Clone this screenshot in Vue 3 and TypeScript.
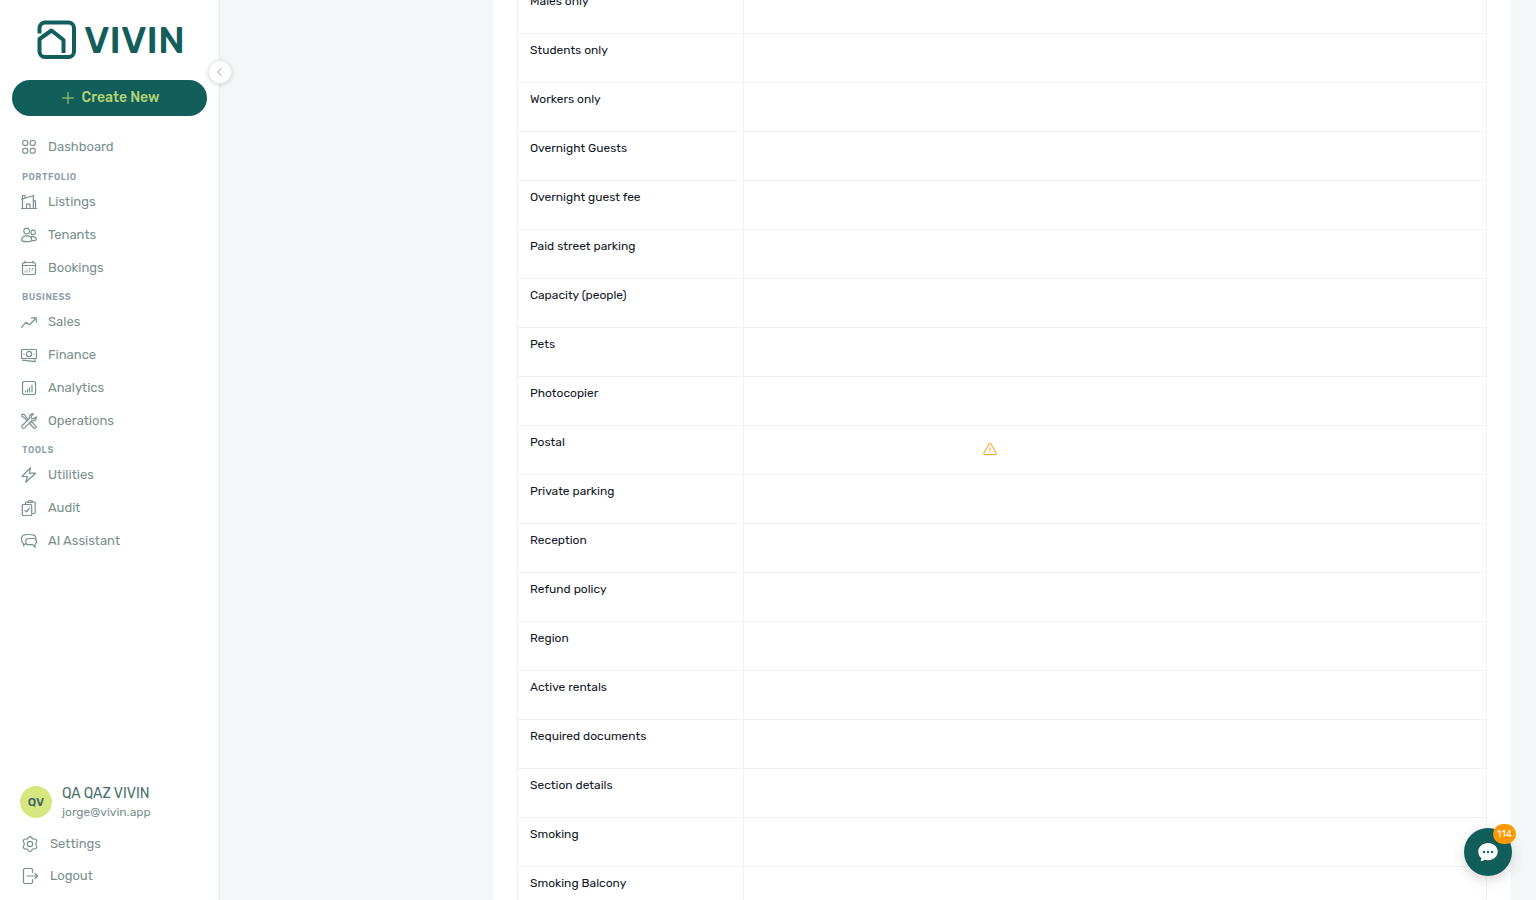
<script setup lang="ts">
interface NavItem {
  label: string
  icon: string
}
interface NavGroup {
  title: string
  items: NavItem[]
}

const icons: Record<string, string> = {
  dashboard:
    'M3.500 1.500h1.500a1.700 1.700 0 0 1 1.700 1.700v1.500a1.700 1.700 0 0 1-1.700 1.700H3.500a1.700 1.700 0 0 1-1.700-1.700V3.200a1.700 1.700 0 0 1 1.700-1.700zM11 1.500h1.500a1.700 1.700 0 0 1 1.700 1.700v1.500a1.700 1.700 0 0 1-1.700 1.700H11a1.700 1.700 0 0 1-1.700-1.700V3.200A1.700 1.700 0 0 1 11 1.500zM3.500 9.300h1.500A1.700 1.700 0 0 1 6.700 11v1.500a1.700 1.700 0 0 1-1.700 1.700H3.500a1.700 1.700 0 0 1-1.700-1.700V11a1.700 1.700 0 0 1 1.700-1.700zM11 9.300h1.500a1.700 1.700 0 0 1 1.700 1.700v1.500a1.700 1.700 0 0 1-1.700 1.700H11a1.700 1.700 0 0 1-1.700-1.700V11A1.700 1.700 0 0 1 11 9.300z',
  listings:
    'M.5 14.500h15M1.500 14.500V5M.7 5.200 13 1.500M12.300 1.800v12.700M1.500 4.500v-3h2.500v2.300M12.300 6.800h2.200v7.700M5.500 14.500v-4.300h3.500v4.300',
  tenants:
    'M5.700 1.200a2.900 2.900 0 1 1 0 5.800 2.900 2.900 0 0 1 0-5.800zM12.200 3.200a2.200 2.200 0 1 1 0 4.500 2.200 2.200 0 0 1 0-4.500zM5.700 8.900c3 0 5 1.700 5 4 0 1-1.500 1.700-5 1.700s-5-.7-5-1.700c0-2.300 2-4 5-4zM10.200 9.900c2.700-.8 5.200.5 5.200 2.600 0 .8-1.300 1.200-3.900 1.200',
  bookings:
    'M3.200 2.500h9.600a1.700 1.700 0 0 1 1.700 1.700v8.600a1.700 1.700 0 0 1-1.700 1.700H3.200a1.700 1.700 0 0 1-1.700-1.700V4.200a1.700 1.700 0 0 1 1.700-1.700zM1.500 5.500h13M4 1v2M12 1v2M8.500 8.500h.3M11.500 8.500h.3M6 10h.3M8.500 10h.3M11 10h.3M4 11.800h.3M6 11.800h.3M8.500 11.800h.3',
  sales: 'M.5 13.300 5 8.300l3.300 2.500 5.700-5.500M10.300 4.200l4.700-.6.400 4.400',
  finance:
    'M1.500 2.500h13a1 1 0 0 1 1 1v7a1 1 0 0 1-1 1h-13a1 1 0 0 1-1-1v-7a1 1 0 0 1 1-1zM8 4.400a2.600 2.600 0 1 1 0 5.200 2.600 2.600 0 0 1 0-5.200zM2.800 7h.4M12.800 7h.4M1.500 13.200l12.500 1.500v-3',
  analytics:
    'M3.300 1.500h9.400a1.800 1.800 0 0 1 1.800 1.800v9.400a1.800 1.800 0 0 1-1.800 1.800H3.300a1.800 1.800 0 0 1-1.800-1.800V3.300a1.800 1.800 0 0 1 1.800-1.800zM4.500 12v-1M6.500 12V9.500M8.500 12V7.500M11 12V5',
  operations:
    'M1.200 1l2.300.6 1 2 3 3M1.200 1 .7 3l2.100 1.400 3.500 3.400M9.500 9.200l1.300-.1 4 4c1 1.200-.8 2.900-1.900 1.900l-4-4 .1-1.300M12.400.8c-3.200-.2-4.600 2-3.800 4.400L2.100 11.600c-2 .7-1.800 3.700.4 3.800 1.100 0 1.700-.6 2-1.600l6.200-6.200c2.500.8 4.900-.7 4.500-3.800l-2.200 2-2.300-.4-.4-2.300z',
  utilities: 'M9.300.8 1 9.500h5.200l-1.500 5.800L14.500 6.200H8.500z',
  audit:
    'M2.300 4.500h7.400a1 1 0 0 1 1 1v9a1 1 0 0 1-1 1H2.300a1 1 0 0 1-1-1v-9a1 1 0 0 1 1-1zM4.500 4.200V3a1 1 0 0 1 1-1h1.300M11 13.500h2.200a1 1 0 0 0 1-1V3a1 1 0 0 0-1-1h-1.400M7 2.500c0-2.400 4.500-2.400 4.500 0zM4 10.500l1.500 1.300L8.200 8.500',
  assistant:
    'M4.700 11H3.900l-1.400 1.800v-2.300C1 9.700.5 8.500.5 6.500c0-4 1.500-5 7-5 5.200 0 7 .6 7.500 3.500M7.200 5.500h5.800a2.400 2.400 0 0 1 2.400 2.400v1.400a2.400 2.400 0 0 1-1.400 2.200v2.800L11.500 11.700H7.200a2.400 2.400 0 0 1-2.400-2.400V7.900a2.400 2.400 0 0 1 2.400-2.400z',
  settings:
    'M8 5.300a2.700 2.700 0 1 1 0 5.400 2.700 2.700 0 0 1 0-5.400zM6.300 1.500C7.300.2 8.700.2 9.700 1.500c.4 1.400 1.200 1.800 2.500 1.500 2-.2 3 1.400 2.300 3-.9 1.200-.9 2.800 0 4 .7 1.600-.3 3.200-2.300 3-1.300-.3-2.100.1-2.500 1.500-1 1.300-2.400 1.300-3.400 0-.4-1.400-1.200-1.800-2.500-1.500-2 .2-3-1.400-2.300-3 .9-1.200.9-2.800 0-4-.7-1.600.3-3.200 2.300-3 1.300.3 2.100-.1 2.500-1.500z',
  logout:
    'M10.500 4.500V2a1.500 1.500 0 0 0-1.500-1.500H3A1.500 1.500 0 0 0 1.500 2v12A1.500 1.500 0 0 0 3 15.500h6a1.500 1.500 0 0 0 1.500-1.500v-2.500M5 8h10.500M13 5.500 15.500 8 13 10.500',
}

const dashboard: NavItem = { label: 'Dashboard', icon: 'dashboard' }

const groups: NavGroup[] = [
  {
    title: 'PORTFOLIO',
    items: [
      { label: 'Listings', icon: 'listings' },
      { label: 'Tenants', icon: 'tenants' },
      { label: 'Bookings', icon: 'bookings' },
    ],
  },
  {
    title: 'BUSINESS',
    items: [
      { label: 'Sales', icon: 'sales' },
      { label: 'Finance', icon: 'finance' },
      { label: 'Analytics', icon: 'analytics' },
      { label: 'Operations', icon: 'operations' },
    ],
  },
  {
    title: 'TOOLS',
    items: [
      { label: 'Utilities', icon: 'utilities' },
      { label: 'Audit', icon: 'audit' },
      { label: 'AI Assistant', icon: 'assistant' },
    ],
  },
]

const footerItems: NavItem[] = [
  { label: 'Settings', icon: 'settings' },
  { label: 'Logout', icon: 'logout' },
]

const rows: { label: string; warning?: boolean }[] = [
  { label: 'Males only' },
  { label: 'Students only' },
  { label: 'Workers only' },
  { label: 'Overnight Guests' },
  { label: 'Overnight guest fee' },
  { label: 'Paid street parking' },
  { label: 'Capacity (people)' },
  { label: 'Pets' },
  { label: 'Photocopier' },
  { label: 'Postal', warning: true },
  { label: 'Private parking' },
  { label: 'Reception' },
  { label: 'Refund policy' },
  { label: 'Region' },
  { label: 'Active rentals' },
  { label: 'Required documents' },
  { label: 'Section details' },
  { label: 'Smoking' },
  { label: 'Smoking Balcony' },
]
</script>

<template>
  <div class="app">
    <aside class="sidebar">
      <a class="brand" href="#">
        <svg class="brand-mark" viewBox="0 0 40 40" aria-hidden="true">
          <path d="M2.500 13.500V8A5.500 5.500 0 0 1 8 2.500h23.500A5.500 5.500 0 0 1 37 8v23.500a5.500 5.500 0 0 1-5.500 5.500H8A5.500 5.500 0 0 1 2.500 31.500V19L14.500 10.500 26.500 20v13" />
        </svg>
        <span class="brand-name">VIVIN</span>
      </a>
      <button class="collapse" type="button" aria-label="Collapse menu">
        <svg viewBox="0 0 10 10" aria-hidden="true"><path d="M6.500 1 2.500 5l4 4" /></svg>
      </button>
      <button class="create" type="button">
        <svg viewBox="0 0 12 12" aria-hidden="true"><path d="M6 .5v11M.5 6h11" /></svg>
        <span>Create New</span>
      </button>

      <nav class="nav" aria-label="Main">
        <a class="item" href="#">
          <svg class="icon" viewBox="0 0 16 16" aria-hidden="true"><path :d="icons[dashboard.icon]" /></svg>
          <span>{{ dashboard.label }}</span>
        </a>
        <section v-for="group in groups" :key="group.title">
          <h2 class="heading">{{ group.title }}</h2>
          <a v-for="item in group.items" :key="item.label" class="item" href="#">
            <svg class="icon" viewBox="0 0 16 16" aria-hidden="true"><path :d="icons[item.icon]" /></svg>
            <span>{{ item.label }}</span>
          </a>
        </section>
      </nav>

      <div class="footer">
        <div class="user">
          <span class="avatar">QV</span>
          <div class="identity">
            <div class="user-name">QA QAZ VIVIN</div>
            <div class="user-mail">jorge@vivin.app</div>
          </div>
        </div>
        <a v-for="item in footerItems" :key="item.label" class="item footer-item" href="#">
          <svg class="icon" viewBox="0 0 16 16" aria-hidden="true"><path :d="icons[item.icon]" /></svg>
          <span>{{ item.label }}</span>
        </a>
      </div>
    </aside>

    <main class="main">
      <div class="card">
        <table class="features">
          <tbody>
            <tr v-for="row in rows" :key="row.label">
              <th scope="row">{{ row.label }}</th>
              <td>
                <div v-if="row.warning" class="notice">
                  <svg viewBox="0 0 16 16" role="img" aria-label="Warning">
                    <path d="M7 2.300a1.200 1.200 0 0 1 2 0l6 10.200a1.100 1.100 0 0 1-1 1.700H2a1.100 1.100 0 0 1-1-1.700zM8 6.500v3M8 11.500v.2" />
                  </svg>
                </div>
              </td>
            </tr>
          </tbody>
        </table>
      </div>
    </main>

    <button class="chat" type="button" aria-label="Open chat">
      <svg viewBox="0 0 20 20" aria-hidden="true">
        <path d="M10 1c5.500 0 9.700 3.600 9.700 8.600s-4.200 8.600-9.700 8.600c-1.200 0-2.300-.2-3.300-.5-1.200.9-2.500 1.400-4.200 1.500.6-1 .8-2 .7-3.200C1.400 14.500.3 12.300.3 9.600.3 4.600 4.500 1 10 1z" />
        <circle cx="6" cy="10" r="1.200" />
        <circle cx="10" cy="10" r="1.200" />
        <circle cx="14" cy="10" r="1.200" />
      </svg>
      <span class="badge">114</span>
    </button>
  </div>
</template>

<style>
body {
  margin: 0;
  overflow: hidden;
}
</style>

<style scoped>
.app {
  display: flex;
  height: 100vh;
  overflow: hidden;
  background: #f3f7f8;
  font-family: Rubik, Inter, "Open Sans", sans-serif;
  color: #111827;
}
.app *,
.app {
  box-sizing: border-box;
}
button {
  border: 0;
  padding: 0;
  font-family: inherit;
  cursor: pointer;
}
a {
  color: inherit;
  text-decoration: none;
}
svg {
  display: block;
  flex: none;
  fill: none;
  stroke: currentColor;
  stroke-linecap: round;
  stroke-linejoin: round;
}
.sidebar {
  position: relative;
  display: flex;
  flex-direction: column;
  flex: none;
  width: 220px;
  padding: 20px 12px 8px;
  border-right: 1px solid #e3e8ea;
  background: #fff;
  color: #78918e;
}
.brand {
  display: flex;
  align-items: center;
  gap: 7px;
  height: 40px;
  margin-bottom: 20px;
  padding-left: 25px;
  color: #125e5b;
}
.brand-mark {
  width: 40px;
  height: 40px;
  stroke-width: 4;
  stroke-linecap: butt;
}
.brand-name {
  font-size: 38px;
  line-height: 40px;
  font-weight: 500;
}
.collapse {
  position: absolute;
  top: 60px;
  right: -13px;
  display: grid;
  place-items: center;
  width: 24px;
  height: 24px;
  border: 1px solid #e3e8ea;
  border-radius: 50%;
  background: #fff;
  box-shadow: 0 1px 4px rgba(0, 0, 0, 0.14);
  color: #9ca3af;
}
.collapse svg {
  width: 10px;
  height: 10px;
}
.create {
  display: flex;
  flex: none;
  align-items: center;
  justify-content: center;
  gap: 8px;
  height: 36px;
  padding-left: 2px;
  border-radius: 18px;
  background: #125e5b;
  color: #b2d573;
  font-size: 14px;
  line-height: 20px;
  font-weight: 500;
}
.create svg {
  width: 12px;
  height: 12px;
}
.nav {
  margin: 14px 0 auto;
}
.item {
  display: flex;
  align-items: center;
  gap: 11px;
  height: 33px;
  padding-left: 9px;
  font-size: 13px;
  line-height: 20px;
}
.icon {
  width: 16px;
  height: 16px;
  stroke-width: 1.2;
}
.nav > section:first-of-type {
  padding-top: 1px;
}
.heading {
  margin: 0;
  padding: 5px 10px 0;
  color: #8f9fae;
  font-size: 9px;
  line-height: 16px;
  font-weight: 600;
  letter-spacing: 0.5px;
}
.user {
  display: flex;
  align-items: center;
  gap: 10px;
  padding: 0 8px 8px;
}
.avatar {
  display: grid;
  place-items: center;
  width: 32px;
  height: 32px;
  border-radius: 50%;
  background: #d6e77f;
  color: #496b67;
  font-size: 12px;
  font-weight: 600;
}
.user-name {
  color: #49706c;
  font-size: 14px;
  line-height: 20px;
}
.user-mail {
  font-size: 12px;
  line-height: 16px;
}
.footer-item {
  gap: 12px;
  height: 32px;
  padding-left: 10px;
}
.main {
  flex: 1;
  min-width: 0;
  padding: 0 25px 0 273px;
  overflow: hidden;
}
.card {
  padding: 0 24px;
  background: #fff;
}
.features {
  width: 100%;
  margin-top: -16px;
  border-collapse: collapse;
  table-layout: fixed;
}
.features th,
.features td {
  height: 49px;
  padding: 8px 12px;
  border: 1px solid #f0f2f3;
  text-align: left;
  vertical-align: top;
}
.features th {
  width: 226px;
  font-size: 12px;
  line-height: 16px;
  font-weight: 400;
}
.features td {
  padding: 0 0 2px 2px;
  vertical-align: middle;
}
.notice {
  display: flex;
  justify-content: center;
  width: 66%;
  color: #f5a623;
}
.notice svg {
  width: 14px;
  height: 14px;
  stroke-width: 1.2;
}
.chat {
  position: fixed;
  right: 24px;
  bottom: 24px;
  display: grid;
  place-items: center;
  width: 48px;
  height: 48px;
  border-radius: 50%;
  background: #125e5b;
  box-shadow: 0 4px 14px rgba(0, 0, 0, 0.16);
  color: #125e5b;
}
.chat svg {
  width: 20px;
  height: 20px;
  stroke: none;
  fill: currentColor;
}
.chat path {
  fill: #fff;
}
.badge {
  position: absolute;
  top: -4px;
  right: -4px;
  min-width: 23px;
  height: 20px;
  padding: 0 3px;
  border-radius: 10px;
  background: #ff9800;
  color: #fff;
  font-size: 10px;
  line-height: 20px;
}
</style>
